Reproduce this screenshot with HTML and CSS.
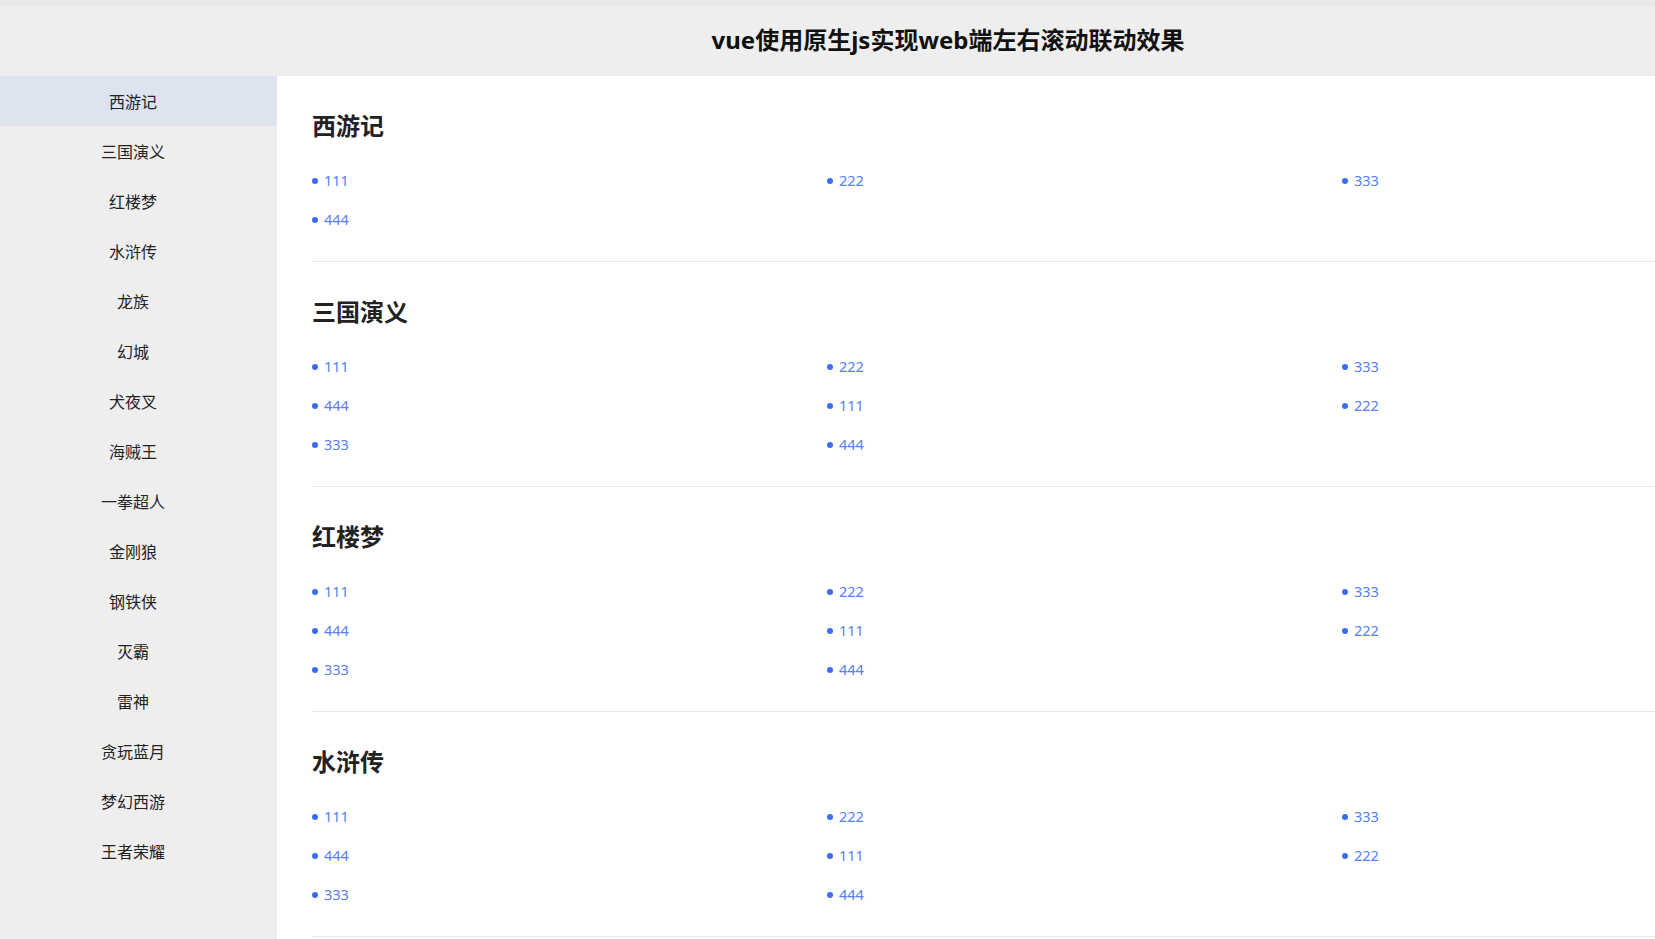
FILE: index.html
```html
<!DOCTYPE html>
<html lang="zh-CN">

<head>
    <meta charset="UTF-8">
    <meta name="viewport" content="width=device-width, initial-scale=1.0">
    <title>vue使用原生js实现web端左右滚动联动效果</title>
    <link rel="stylesheet" href="styles.css">
</head>

<body>
    <div class="header">
        <h1>vue使用原生js实现web端左右滚动联动效果</h1>
    </div>
    <div class="wrap">
        <ul class="nav" id="nav">
            <!-- 左侧菜单 -->
        </ul>
        <div class="content" id="content">
            <!-- 右侧内容 -->
        </div>
    </div>

    <script>
        const books = ["西游记", "三国演义", "红楼梦", "水浒传", "龙族", "幻城", "犬夜叉", "海贼王",
            "一拳超人", "金刚狼", "钢铁侠", "灭霸", "雷神", "贪玩蓝月", "梦幻西游", "王者荣耀"];
        const shortList = ["111", "222", "333", "444"];
        const longList = ["111", "222", "333", "444", "111", "222", "333", "444"];

        let active = 0;

        function render() {
            const nav = document.getElementById("nav");
            const content = document.getElementById("content");
            nav.innerHTML = "";
            content.innerHTML = "";

            books.forEach((name, i) => {
                nav.innerHTML += `<li class="nav-item${i === active ? " active" : ""}" onclick="jump(${i})">${name}</li>`;

                const list = i === 0 ? shortList : longList;
                let items = "";
                list.forEach(n => {
                    items += `<li>${n}</li>`;
                });
                content.innerHTML += `
                    <div class="section">
                        <h2>${name}</h2>
                        <ul class="item-list">${items}</ul>
                    </div>
                `;
            });
        }

        function jump(i) {
            active = i;
            const content = document.getElementById("content");
            content.scrollTop = content.children[i].offsetTop;
            render();
        }

        render();
    </script>
</body>

</html>
```

FILE: styles.css
```css
body {
    font-family: "Noto Sans", "Noto Sans CJK SC", sans-serif;
    margin: 0;
    padding: 0;
    background-color: white;
    color: #222;
    overflow: hidden;
}

ul {
    list-style: none;
    margin: 0;
    padding: 0;
}

.header {
    height: 76px;
    background: linear-gradient(#e9e9e9 0, #e9e9e9 6px, #eeeeee 6px);
    display: flex;
    align-items: center;
    justify-content: center;
    padding: 0 36px 0 277px;
}

.header h1 {
    margin: 0;
    font-size: 24px;
    font-weight: bold;
    color: #111;
}

.wrap {
    display: flex;
    height: calc(100vh - 76px);
}

.nav {
    width: 266px;
    padding-right: 11px;
    flex-shrink: 0;
    background-color: #eeeeee;
}

.nav-item {
    height: 50px;
    line-height: 52px;
    text-align: center;
    font-size: 16px;
    color: #222;
    cursor: pointer;
}

.nav-item.active {
    background-color: #dee3f0;
    margin-right: -11px;
    padding-right: 11px;
}

.content {
    flex: 1;
    padding-left: 35px;
    overflow: hidden;
}

.section {
    padding: 30px 0 22px;
    border-bottom: 1px solid #e8e8e8;
}

.section h2 {
    margin: 0 0 15px;
    font-size: 24px;
    line-height: 40px;
    font-weight: bold;
    color: #222;
}

.item-list {
    display: grid;
    grid-template-columns: repeat(3, 515px);
}

.item-list li {
    height: 39px;
    line-height: 39px;
    font-size: 14.5px;
    color: #5580f2;
    display: flex;
    align-items: center;
}

.item-list li::before {
    content: "";
    width: 6px;
    height: 6px;
    border-radius: 50%;
    background-color: #3c6cf0;
    margin-right: 6px;
}
```
